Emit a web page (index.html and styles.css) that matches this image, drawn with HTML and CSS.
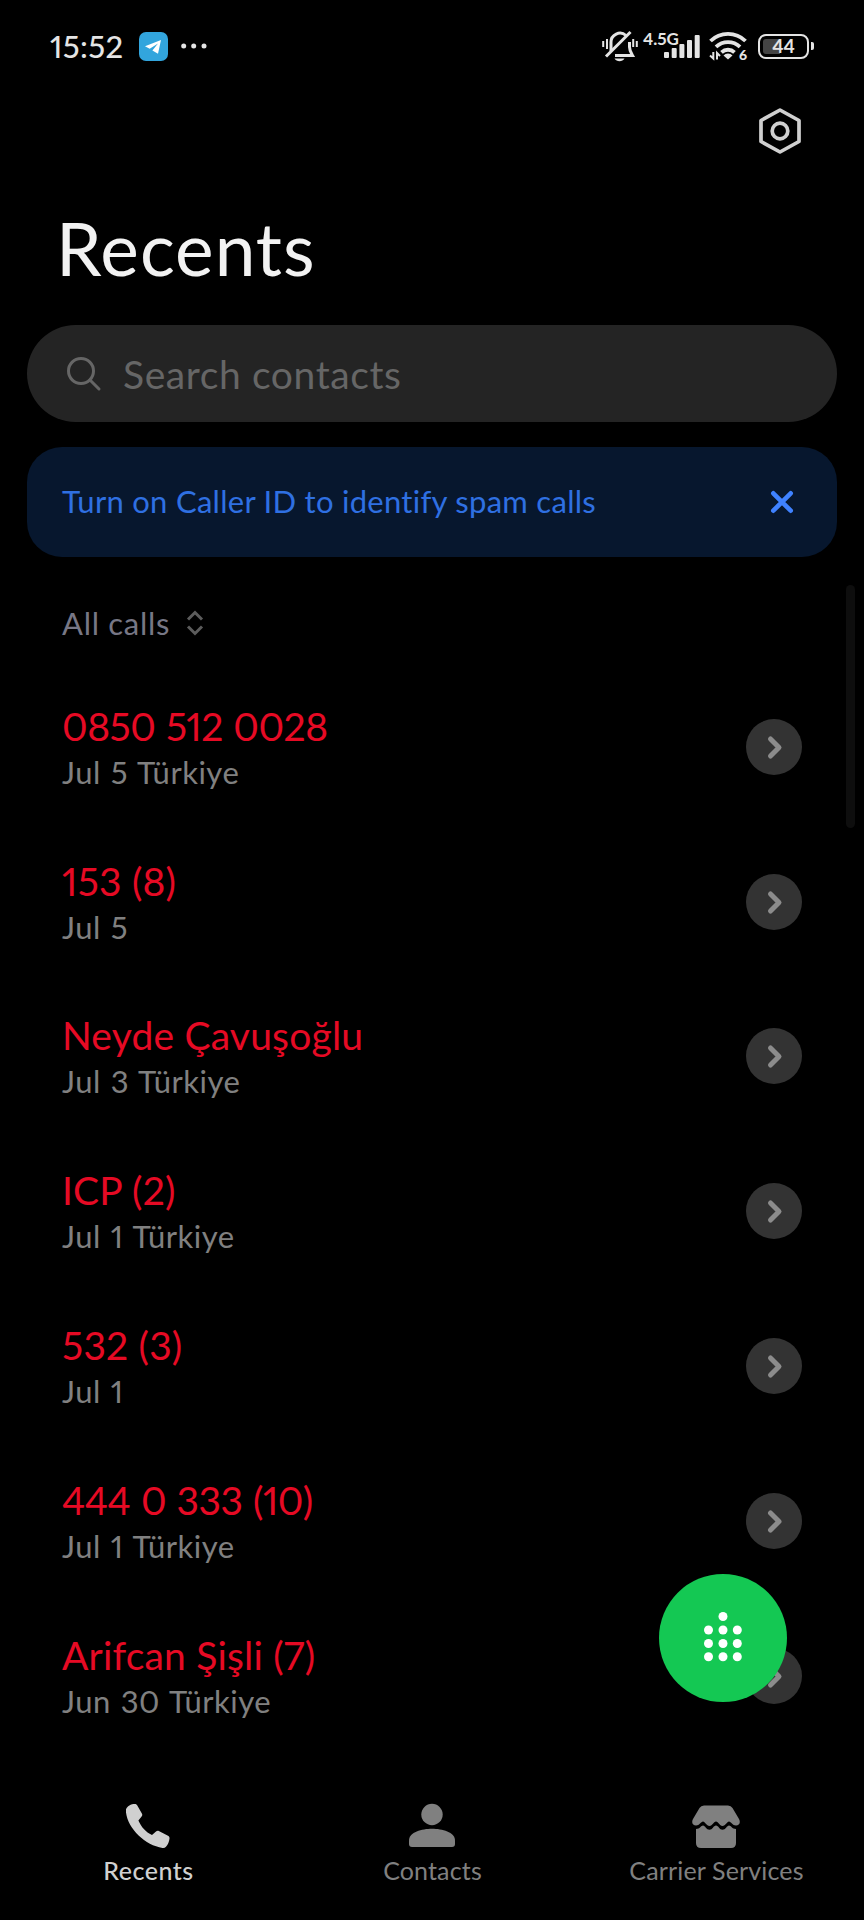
FILE: index.html
```html
<!DOCTYPE html>
<html lang="en">
<head>
    <meta charset="UTF-8">
    <meta name="viewport" content="width=device-width, initial-scale=1.0">
    <title>Recents</title>
    <link rel="stylesheet" href="styles.css">
</head>
<body>
    <svg class="symbols">
        <symbol id="chevron" viewBox="0 0 56 56">
            <path d="M24.500 20l8.500 8.500-8.500 8.500" fill="none" stroke="#8c8c8c" stroke-width="5" stroke-linecap="round" stroke-linejoin="round"/>
        </symbol>
    </svg>

    <div class="status-bar">
        <span class="time">15:52</span>
        <svg class="telegram" width="29" height="29" viewBox="0 0 29 29">
            <rect width="29" height="29" rx="7" fill="#32a5dd"/>
            <path d="M6 14.200L22 8l-3 13.800-5.600-3.300 5.600-7-8.300 5.300z" fill="#fff"/>
        </svg>
        <svg class="dots" width="26" height="6" viewBox="0 0 26 6">
            <circle cx="2.700" cy="3" r="2.500"/>
            <circle cx="12.700" cy="3" r="2.500"/>
            <circle cx="23" cy="3" r="2.500"/>
        </svg>
        <div class="status-right">
            <svg width="36" height="32" viewBox="0 0 36 32" fill="none" stroke="#e4e4e4">
                <path d="M9 21v-8.500a9 9 0 0 1 15-7M27.500 12v5c0 3.500 1 5 3 8.500H13" stroke-width="3"/>
                <path d="M4 26.500L28.500 2" stroke-width="3"/>
                <path d="M1.200 11v6M5 9v10M31.200 9v8M34.800 11v6" stroke-width="2"/>
                <path d="M12.500 28.500h10c-2 3.500-8 3.500-10 0z" fill="#e4e4e4" stroke="none"/>
            </svg>
            <div class="signal">
                <span class="network">4.5G</span>
                <svg class="bars" width="36" height="23" viewBox="0 0 36 23" fill="#e4e4e4">
                    <rect x="0" y="17" width="5" height="6" rx="1"/>
                    <rect x="7.700" y="13" width="5" height="10" rx="1"/>
                    <rect x="15.400" y="9" width="5" height="14" rx="1"/>
                    <rect x="23" y="5" width="5" height="18" rx="1"/>
                    <rect x="30.700" y="0" width="5" height="23" rx="1"/>
                </svg>
            </div>
            <div class="wifi">
                <svg width="38" height="30" viewBox="0 0 38 30" fill="none" stroke="#e4e4e4" stroke-width="3.800">
                    <path d="M1.500 10a25 25 0 0 1 35 0M7 15.800a17.500 17.500 0 0 1 24 0M12.500 21.300a9.500 9.500 0 0 1 13 0"/>
                    <path d="M14.500 24.500a6 6 0 0 1 9 0L19 28.500z" fill="#e4e4e4" stroke="none"/>
                    <path d="M1 24.500l3.300 3V21M8 28.500V22l3 3" stroke-width="2"/>
                </svg>
                <span class="wifi-gen">6</span>
            </div>
            <div class="battery"><span class="battery-body">44</span><span class="battery-tip"></span></div>
        </div>
    </div>

    <div class="toolbar">
        <svg width="44" height="48" viewBox="0 0 44 48" fill="none" stroke="#d0d0d0" stroke-width="3.700" stroke-linejoin="round">
            <path d="M22 3l19 10.500v21L22 45 3 34.500v-21z"/>
            <circle cx="22" cy="24" r="7.800"/>
        </svg>
    </div>

    <h1>Recents</h1>

    <div class="search">
        <svg width="36" height="36" viewBox="0 0 36 36" fill="none" stroke="#666" stroke-width="3" stroke-linecap="round">
            <circle cx="15" cy="15" r="12.500"/>
            <path d="M24 24l9 9"/>
        </svg>
        <span class="search-text">Search contacts</span>
    </div>

    <div class="banner">
        <span class="banner-text">Turn on Caller ID to identify spam calls</span>
        <svg width="24" height="24" viewBox="0 0 24 24" fill="none" stroke="#3f82ff" stroke-width="4.600" stroke-linecap="round">
            <path d="M3.300 3.300l17.400 17.400M20.700 3.300L3.300 20.700"/>
        </svg>
    </div>

    <div class="filter">
        <span>All calls</span>
        <svg width="18" height="26" viewBox="0 0 18 26" fill="none" stroke="#5c5c5c" stroke-width="3">
            <path d="M2 9.500L9 2.500l7 7M2 16.500l7 7 7-7"/>
        </svg>
    </div>

    <div class="call-list">
        <div class="call">
            <div class="info">
                <div class="name number">0850 512 0028</div>
                <div class="detail">Jul 5 Türkiye</div>
            </div>
            <svg class="more"><use href="#chevron"/></svg>
        </div>
        <div class="call">
            <div class="info">
                <div class="name">153 (8)</div>
                <div class="detail">Jul 5</div>
            </div>
            <svg class="more"><use href="#chevron"/></svg>
        </div>
        <div class="call">
            <div class="info">
                <div class="name">Neyde Çavuşoğlu</div>
                <div class="detail">Jul 3 Türkiye</div>
            </div>
            <svg class="more"><use href="#chevron"/></svg>
        </div>
        <div class="call">
            <div class="info">
                <div class="name">ICP (2)</div>
                <div class="detail">Jul 1 Türkiye</div>
            </div>
            <svg class="more"><use href="#chevron"/></svg>
        </div>
        <div class="call">
            <div class="info">
                <div class="name">532 (3)</div>
                <div class="detail">Jul 1</div>
            </div>
            <svg class="more"><use href="#chevron"/></svg>
        </div>
        <div class="call">
            <div class="info">
                <div class="name number">444 0 333 (10)</div>
                <div class="detail">Jul 1 Türkiye</div>
            </div>
            <svg class="more"><use href="#chevron"/></svg>
        </div>
        <div class="call">
            <div class="info">
                <div class="name">Arifcan Şişli (7)</div>
                <div class="detail">Jun 30 Türkiye</div>
            </div>
            <svg class="more"><use href="#chevron"/></svg>
        </div>
    </div>

    <div class="nav">
        <div class="tab active">
            <svg width="46" height="46" viewBox="0 0 46 46" fill="currentColor">
                <path d="M1 6.500C2 3 6 1 10 1c1 0 1.700.5 2.300 1.500l4.700 8.300c.5 1 .3 1.800-.4 2.600l-3.200 4.100c2.800 6.500 7.300 11.500 13.600 14.500l4.300-3.700c.8-.7 1.600-.8 2.500-.3l9.200 4.700c1.200.7 1.700 1.500 1.500 2.800-.3 3-1.500 6.200-3.500 8.200-1 1-2 1.400-3.500 1.200C20.500 42.500 3 26 1 9.500z"/>
            </svg>
            <span>Recents</span>
        </div>
        <div class="tab">
            <svg width="46" height="46" viewBox="0 0 46 46" fill="currentColor">
                <circle cx="23" cy="11.500" r="10.700"/>
                <path d="M0 37.500C0 29 13 25.700 23 25.700S46 29 46 37.500V41q0 3-3 3H3q-3 0-3-3z"/>
            </svg>
            <span>Contacts</span>
        </div>
        <div class="tab">
            <svg width="48" height="46" viewBox="0 0 48 46" fill="currentColor">
                <path d="M12 2.500h24q3 0 4.500 2.500l6.500 11c2 4 0 6.500-3 6.500-3.500 0-5-4-7-4s-3.500 4.500-6.500 4.500-4-4.500-6.500-4.500-3.500 4.500-6.500 4.500-4.500-4.500-6.500-4.500-3.500 4-7 4c-3 0-5-2.500-3-6.500L7.500 5Q9 2.500 12 2.500z"/>
                <path d="M4 26c4 0 5-3.500 7-3.500s3.500 4.300 6.500 4.300 4-4.300 6.500-4.300 3.500 4.300 6.500 4.300 4.500-4.300 6.500-4.300 3 3.500 7 3.500v14q0 5-5 5H9q-5 0-5-5z"/>
            </svg>
            <span>Carrier Services</span>
        </div>
    </div>

    <div class="scrollbar"></div>
    <div class="dial">
        <svg width="40" height="52" viewBox="0 0 40 52" fill="#fff">
            <circle cx="20" cy="4.500" r="4.500"/>
            <circle cx="5.500" cy="18" r="4.500"/>
            <circle cx="20" cy="18" r="4.500"/>
            <circle cx="34.300" cy="18" r="4.500"/>
            <circle cx="5.500" cy="31.500" r="4.500"/>
            <circle cx="20" cy="31.500" r="4.500"/>
            <circle cx="34.300" cy="31.500" r="4.500"/>
            <circle cx="5.500" cy="44.800" r="4.500"/>
            <circle cx="20" cy="44.800" r="4.500"/>
            <circle cx="34.300" cy="44.800" r="4.500"/>
        </svg>
    </div>
</body>
</html>
```

FILE: styles.css
```css
* {
    box-sizing: border-box;
}

body {
    margin: 0;
    width: 864px;
    height: 1920px;
    background: #000;
    color: #f2f2f2;
    font-family: Lato, sans-serif;
    font-variant-numeric: proportional-nums;
    position: relative;
    overflow: hidden;
}

svg {
    display: block;
    flex-shrink: 0;
}

.symbols {
    position: absolute;
    width: 0;
    height: 0;
}

.status-bar {
    display: flex;
    align-items: center;
    height: 92px;
    padding: 0 50px;
    color: #e4e4e4;
}

.time {
    width: 89px;
    font-size: 31px;
    font-weight: 500;
    letter-spacing: 0.4px;
    line-height: 40px;
}

.dots {
    margin-left: 13px;
    fill: #e4e4e4;
}

.status-right {
    display: flex;
    align-items: center;
    margin-left: auto;
}

.signal {
    display: flex;
    align-items: flex-end;
    width: 57px;
    height: 24px;
    margin-left: 5px;
    position: relative;
}

.network {
    position: absolute;
    left: 0;
    top: -5px;
    font-size: 17px;
    font-weight: 700;
    line-height: 20px;
}

.bars {
    margin-left: 21px;
}

.wifi {
    position: relative;
    margin-left: 9px;
}

.wifi-gen {
    position: absolute;
    right: 0;
    bottom: -1px;
    font-size: 14px;
    font-weight: 900;
    line-height: 14px;
    background: #000;
}

.battery {
    display: flex;
    align-items: center;
    gap: 2px;
    margin-left: 11px;
}

.battery-body {
    width: 51px;
    height: 25px;
    border: 2.5px solid #e4e4e4;
    border-radius: 8px;
    background: linear-gradient(to right, #444 42%, #000 42%) content-box;
    padding: 3px;
    font-size: 19px;
    font-weight: 700;
    line-height: 14px;
    text-align: center;
}

.battery-tip {
    width: 3px;
    height: 8px;
    border-radius: 0 2px 2px 0;
    background: #e4e4e4;
}

.toolbar {
    display: flex;
    justify-content: flex-end;
    padding: 15px 62px 0 0;
    height: 113px;
}

h1 {
    margin: 0;
    padding-left: 56px;
    height: 120px;
    font-size: 73px;
    font-weight: 400;
    letter-spacing: 1px;
    line-height: 87px;
}

.search {
    display: flex;
    align-items: center;
    gap: 21px;
    height: 97px;
    margin: 0 27px;
    padding-left: 39px;
    border-radius: 49px;
    background: #242424;
}

.search-text {
    color: #666;
    font-size: 39px;
    letter-spacing: 0.6px;
}

.banner {
    display: flex;
    align-items: center;
    justify-content: space-between;
    height: 110px;
    margin: 24.5px 27px 0;
    padding: 0 43px 0 35px;
    border-radius: 35px;
    background: #07172e;
}

.banner-text {
    color: #2f70e2;
    font-size: 31px;
    letter-spacing: 0.28px;
    padding-bottom: 2px;
}

.filter {
    display: flex;
    align-items: center;
    gap: 16px;
    height: 113px;
    padding: 20px 0 0 62px;
    color: #777785;
    font-size: 31px;
    letter-spacing: 0.7px;
}

.call-list {
    height: 1084px;
}

.call {
    display: flex;
    align-items: center;
    justify-content: space-between;
    height: 154.8px;
    padding: 0 62px;
}

.info {
    padding-top: 2px;
}

.name {
    color: #e60a24;
    font-size: 39px;
    letter-spacing: 0.2px;
    line-height: 48px;
}

.number {
    letter-spacing: -0.5px;
    word-spacing: 1px;
}

.detail {
    color: #808080;
    font-size: 31px;
    letter-spacing: 0.5px;
    word-spacing: 1.5px;
    line-height: 44px;
}

.more {
    width: 56px;
    height: 56px;
    border-radius: 50%;
    background: #333;
}

.nav {
    display: grid;
    grid-template-columns: repeat(3, 1fr);
    padding: 49px 6px 0;
}

.tab {
    display: flex;
    flex-direction: column;
    align-items: center;
    gap: 6px;
    color: #808080;
    font-size: 25px;
    letter-spacing: 0.15px;
    line-height: 30px;
}

.tab span {
    padding-left: 1px;
}

.active {
    color: #d0d0d0;
    font-weight: 500;
    letter-spacing: 0.5px;
}

.scrollbar {
    position: absolute;
    top: 585px;
    right: 9px;
    width: 9px;
    height: 243px;
    border-radius: 5px;
    background: #0e0e0e;
}

.dial {
    display: flex;
    align-items: center;
    justify-content: center;
    position: absolute;
    left: 659px;
    top: 1574px;
    width: 128px;
    height: 128px;
    border-radius: 50%;
    background: #14c853;
}
```
